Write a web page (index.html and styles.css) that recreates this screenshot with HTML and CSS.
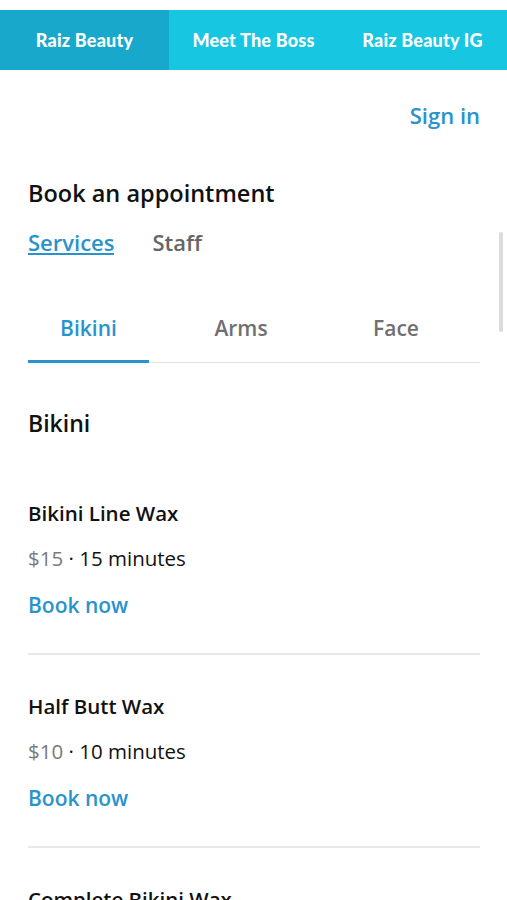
FILE: index.html
```html
<!DOCTYPE html>
<html lang="en">
<head>
    <meta charset="UTF-8">
    <meta name="viewport" content="width=device-width, initial-scale=1.0">
    <title>Raiz Beauty - Book an appointment</title>
    <link rel="stylesheet" href="styles.css">
</head>
<body>
    <nav class="site-nav">
        <a class="nav-item active">Raiz Beauty</a>
        <a class="nav-item">Meet The Boss</a>
        <a class="nav-item">Raiz Beauty IG</a>
    </nav>

    <div class="page">
        <div class="sign-in-row">
            <a class="link sign-in">Sign in</a>
        </div>

        <h1 class="page-title">Book an appointment</h1>

        <div class="view-switch">
            <span class="switch-item active">Services</span>
            <span class="switch-item">Staff</span>
        </div>

        <div class="category-tabs">
            <div class="tab active">Bikini</div>
            <div class="tab">Arms</div>
            <div class="tab">Face</div>
        </div>

        <h2 class="category-title">Bikini</h2>

        <div class="service">
            <div class="service-name">Bikini Line Wax</div>
            <div class="service-meta"><span class="price">$15</span> · 15 minutes</div>
            <a class="link book">Book now</a>
        </div>

        <div class="service">
            <div class="service-name">Half Butt Wax</div>
            <div class="service-meta"><span class="price">$10</span> · 10 minutes</div>
            <a class="link book">Book now</a>
        </div>

        <div class="service">
            <div class="service-name">Complete Bikini Wax</div>
            <div class="service-meta"><span class="price">$45</span> · 30 minutes</div>
            <a class="link book">Book now</a>
        </div>
    </div>

    <div class="scroll-thumb"></div>
</body>
</html>
```

FILE: styles.css
```css
body {
    margin: 0;
    font-family: "Open Sans", "Liberation Sans", sans-serif;
    font-weight: 500;
    color: #111;
    background: white;
}
.site-nav {
    display: grid;
    grid-template-columns: repeat(3, 1fr);
    margin-top: 10px;
    height: 60px;
    background-color: #17c6e1;
}
.nav-item {
    display: flex;
    align-items: center;
    justify-content: center;
    color: white;
    font-family: Lato, sans-serif;
    font-weight: 900;
    font-size: 18px;
    letter-spacing: 0.2px;
}
.nav-item.active {
    background-color: #17a8cb;
}
.page {
    padding: 0 27px 0 28px;
}
.link {
    color: #2a93cb;
    font-weight: 600;
    font-size: 21px;
}
.sign-in-row {
    margin-top: 33px;
    text-align: right;
    line-height: 24px;
}
.sign-in {
    font-size: 22px;
}
.page-title {
    margin: 49px 0 0;
    font-size: 23.5px;
    font-weight: 600;
    line-height: 28px;
}
.view-switch {
    display: flex;
    gap: 38px;
    margin-top: 24px;
}
.switch-item {
    font-size: 22px;
    font-weight: 600;
    line-height: 22px;
    color: #666;
    border-bottom: 2px solid transparent;
}
.switch-item.active {
    color: #2a93cb;
    border-bottom-color: #2a93cb;
}
.category-tabs {
    display: grid;
    grid-template-columns: 121px 184px 126px;
    margin-top: 61px;
    border-bottom: 1px solid #e2e2e2;
}
.tab {
    text-align: center;
    font-size: 21px;
    font-weight: 600;
    line-height: 24px;
    padding-bottom: 20px;
    color: #707070;
    border-bottom: 3px solid transparent;
    margin-bottom: -1px;
}
.tab.active {
    color: #2a93cb;
    border-bottom-color: #2a93cb;
}
.category-title {
    margin: 46px 0 25px;
    font-size: 23px;
    font-weight: 600;
    line-height: 28px;
}
.service {
    padding: 39px 0 36px;
    border-bottom: 2px solid #e8e8e8;
}
.service-name {
    font-size: 20.5px;
    font-weight: 600;
    line-height: 24px;
}
.service-meta {
    margin: 21px 0 23px;
    font-size: 20.5px;
    line-height: 24px;
}
.price {
    color: #7a7a7a;
    font-weight: 400;
}
.book {
    display: block;
    line-height: 24px;
}
.scroll-thumb {
    position: absolute;
    top: 232px;
    right: 4px;
    width: 4px;
    height: 100px;
    border-radius: 2px;
    background: #dcdcdc;
}
```
